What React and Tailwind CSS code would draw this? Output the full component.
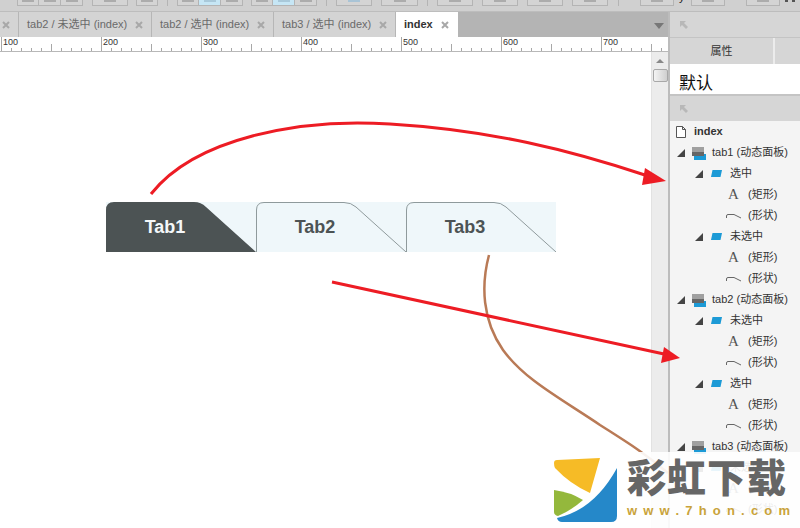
import React from 'react'

const font = "font-['Liberation_Sans','Noto_Sans_CJK_SC',sans-serif]"

const ToolBtn = ({ w, active, blueIcon }) => (
  <div className={`h-[6px] border-r border-b border-[#b4b4b4] flex justify-center ${active ? 'bg-[#c6e6f5]' : 'bg-[#d4d4d4]'}`} style={{ width: w }}>
    <div className={`w-[12px] h-[2px] ${active ? 'bg-[#a9c9da]' : blueIcon ? 'bg-[#a9c4d6]' : 'bg-[#acacac]'}`} />
  </div>
)

const Group = ({ ml, children }) => (
  <div className="flex border-l border-[#b4b4b4]" style={{ marginLeft: ml }}>{children}</div>
)

const Divider = ({ ml }) => <div className="w-px h-[6px] bg-[#b4b4b4]" style={{ marginLeft: ml }} />

const Toolbar = () => (
  <div className="h-[12px] shrink-0 bg-[#d0d0d0] flex items-start border-b border-[#bdbdbd]">
    <Group ml={17}><ToolBtn w={21} /><ToolBtn w={22} /><ToolBtn w={22} /></Group>
    <Group ml={9}><ToolBtn w={35} /></Group>
    <Group ml={8}><ToolBtn w={21} /></Group>
    <Divider ml={9} />
    <Group ml={9}><ToolBtn w={21} /><ToolBtn w={22} active /><ToolBtn w={22} /></Group>
    <Group ml={8}><ToolBtn w={21} /><ToolBtn w={22} active /><ToolBtn w={22} /></Group>
    <Divider ml={9} />
    <Group ml={9}><ToolBtn w={35} blueIcon /></Group>
    <Group ml={9}><ToolBtn w={36} /></Group>
    <Divider ml={9} />
    <Group ml={9}><ToolBtn w={35} /></Group>
    <Group ml={9}><ToolBtn w={35} /></Group>
    <Group ml={9}><ToolBtn w={35} /></Group>
    <Group ml={9}><ToolBtn w={35} /></Group>
    <Divider ml={10} />
    <Group ml={21}><ToolBtn w={33} /></Group>
    <span className="w-[17px] pl-[5px] -mt-[3px] text-[11px] leading-[0px] text-[#222]">y</span>
    <Group ml={0}><ToolBtn w={33} /></Group>
    <Group ml={21}><ToolBtn w={33} /></Group>
    <div className="ml-[5px] w-[3px] h-[2px] bg-[#555]" />
    <div className="ml-[4px] w-[3px] h-[2px] bg-[#555]" />
  </div>
)

const CloseX = () => (
  <svg width="8" height="8" viewBox="0 0 8 8" className="shrink-0">
    <path d="M1 1 L7 7 M7 1 L1 7" stroke="#a8a8a8" strokeWidth="2" />
  </svg>
)

const Tab = ({ label, w }) => (
  <div className="h-full flex items-center justify-between pl-[8px] pr-[8px] border-r border-[#b6b6b6] bg-[#d4d4d4]" style={{ width: w }}>
    <span className="text-[11px] text-[#6a6a6a] whitespace-nowrap">{label}</span>
    <CloseX />
  </div>
)

const TabBar = () => (
  <div className="h-[25px] shrink-0 bg-[#b4b4b4] flex items-stretch">
    <div className="w-[19px] flex items-center justify-center pr-[6px] border-r border-[#b6b6b6] bg-[#d4d4d4]"><CloseX /></div>
    <Tab label="tab2 / 未选中 (index)" w={133} />
    <Tab label="tab2 / 选中 (index)" w={122} />
    <Tab label="tab3 / 选中 (index)" w={122} />
    <div className="w-[62px] bg-white flex items-center gap-[8px] pl-[8px]">
      <span className="text-[11px] font-bold text-[#333]">index</span>
      <CloseX />
    </div>
    <div className="flex-1 flex items-center justify-end pr-[4px]">
      <div className="w-0 h-0 mt-[2px] border-x-[5px] border-x-transparent border-t-[6px] border-t-[#777]" />
    </div>
  </div>
)

const rulerTicks = Array.from({ length: 67 }, (_, i) => i)

const Ruler = () => (
  <div className="h-[15px] shrink-0 bg-white border-b border-[#b8b8b8] relative overflow-hidden">
    <svg width="668" height="14" className="absolute inset-0">
      {rulerTicks.map((i) => {
        const x = 1.5 + i * 10
        const h = i % 10 === 0 ? 14 : i % 5 === 0 ? 7 : 3
        return <line key={i} x1={x} x2={x} y1={14 - h} y2={14} stroke="#a8a8a8" />
      })}
    </svg>
    <div className="flex">
      {[100, 200, 300, 400, 500, 600, 700].map((n) => (
        <span key={n} className="w-[100px] shrink-0 pl-[3px] text-[9px] leading-[11px] text-[#333] relative">{n}</span>
      ))}
    </div>
  </div>
)

const WidgetTab = ({ label, active }) => (
  <div className="w-[150px] h-[50px] relative flex items-center justify-center">
    <svg width="150" height="50" viewBox="0 0 150 50" className="absolute inset-0">
      {active ? (
        <path d="M0 50 V8 Q0 0 8 0 H88 Q95 0 100 5 L150 50 Z" fill="#4c5354" />
      ) : (
        <path d="M0.5 50 V8 Q0.5 0.5 8 0.5 H88 Q95 0.5 100 5 L150 50" fill="none" stroke="#8f9a9c" />
      )}
    </svg>
    <span className={`relative pr-[32px] text-[18px] font-bold ${active ? 'text-[#f4f8fa]' : 'text-[#4c5354]'}`}>{label}</span>
  </div>
)

const Canvas = () => (
  <div className="flex-1 flex bg-white min-h-0">
    <div className="flex-1 pl-[106px] pt-[150px]">
      <div className="w-[450px] h-[50px] flex bg-[#eff7fa]">
        <WidgetTab label="Tab1" active />
        <WidgetTab label="Tab2" />
        <WidgetTab label="Tab3" />
      </div>
    </div>
    <div className="w-[17px] shrink-0 bg-[#ececec] border-l border-[#e2e2e2] flex flex-col items-center pt-[7px]">
      <div className="w-0 h-0 border-x-[4px] border-x-transparent border-b-[4px] border-b-[#888]" />
      <div className="w-[15px] h-[13px] mt-[6px] rounded-[2px] border border-[#a8a8a8] bg-gradient-to-r from-[#f4f4f4] to-[#cfcfcf]" />
    </div>
  </div>
)

const Caret = () => (
  <div className="w-0 h-0 border-l-[8px] border-l-transparent border-b-[8px] border-b-[#444] shrink-0" />
)

const PanelIcon = () => (
  <svg width="16" height="14" viewBox="0 0 16 14" className="shrink-0 block">
    <rect x="3" y="8" width="12" height="6" fill="#1c9ad6" />
    <rect x="1" y="5" width="12" height="5" fill="#666" />
    <rect x="1" y="1" width="12" height="5" fill="#a0a0a0" />
  </svg>
)

const StateIcon = () => (
  <svg width="11" height="7" viewBox="0 0 11 7" className="shrink-0 block">
    <path d="M1.5 0 H11 L9.5 7 H0 Z" fill="#1c9ad6" />
  </svg>
)

const RectIcon = () => (
  <span className="w-[13px] font-['Liberation_Serif',serif] text-[15px] leading-none text-[#555] text-center">A</span>
)

const ShapeIcon = () => (
  <svg width="15" height="6" viewBox="0 0 15 6" className="shrink-0 -ml-[1px] mr-[-1px]">
    <path d="M0.5 5 V3 Q0.5 1.5 2 1.5 H8 L15 5" fill="none" stroke="#666" />
  </svg>
)

const Row = ({ indent, children }) => (
  <div className="h-[21px] flex items-center text-[11px] text-[#333] whitespace-nowrap" style={{ paddingLeft: indent }}>
    {children}
  </div>
)

const StateRows = ({ name }) => (
  <>
    <Row indent={25}><Caret /><span className="ml-[8px]"><StateIcon /></span><span className="ml-[8px]">{name}</span></Row>
    <Row indent={57}><RectIcon /><span className="ml-[8px]">(矩形)</span></Row>
    <Row indent={57}><ShapeIcon /><span className="ml-[8px]">(形状)</span></Row>
  </>
)

const PanelRows = ({ name, states }) => (
  <>
    <Row indent={7}><Caret /><span className="ml-[6px]"><PanelIcon /></span><span className="ml-[5px]">{name} (动态面板)</span></Row>
    {states.map((s) => <StateRows key={s} name={s} />)}
  </>
)

const PinIcon = () => (
  <svg width="10" height="10" viewBox="0 0 10 10"><path d="M1 1 H7 L5 3 L9 7 L7 9 L3 5 L1 7 Z" fill="#b8b8b8" /></svg>
)

const Sidebar = () => (
  <div className="w-[132px] shrink-0 border-l-2 border-[#bcbcbc] flex flex-col bg-[#f4f4f4] overflow-hidden">
    <div className="h-[25px] shrink-0 bg-[#d6d6d6] flex items-center pl-[9px]"><PinIcon /></div>
    <div className="h-[27px] shrink-0 bg-[#d6d6d6] flex border-t border-[#c4c4c4]">
      <div className="w-[105px] pt-[1px] flex items-center justify-center border-r-2 border-[#ececec] text-[11px] text-[#333]">属性</div>
    </div>
    <div className="h-[32px] shrink-0 bg-white border-b-2 border-[#c4c4c4] pl-[9px] flex items-end text-[17px] leading-[20px] text-[#111]">默认</div>
    <div className="h-[25px] shrink-0 bg-[#d6d6d6] flex items-center pl-[9px]"><PinIcon /></div>
    <div>
      <Row indent={6}>
        <svg width="10" height="12" viewBox="0 0 10 12" className="shrink-0"><path d="M0.5 0.5 H6.5 L9.5 3.5 V11.5 H0.5 Z M6.5 0.5 V3.5 H9.5" fill="#fff" stroke="#555" /></svg>
        <span className="ml-[8px] text-[11px] font-bold">index</span>
      </Row>
      <PanelRows name="tab1" states={['选中', '未选中']} />
      <PanelRows name="tab2" states={['未选中', '选中']} />
      <PanelRows name="tab3" states={['未选中']} />
    </div>
  </div>
)

const Arrows = () => (
  <svg width="800" height="528" viewBox="0 0 800 528" className="absolute inset-0 pointer-events-none">
    <path d="M489 255 C481 285 482 320 503 350 C525 380 560 398 600 425 C625 441 645 453 668 473" fill="none" stroke="#b97a56" strokeWidth="2.5" />
    <path d="M151 194 C195 138 300 118 390 124 C490 130 570 150 648 176" fill="none" stroke="#ed1c24" strokeWidth="3" />
    <path d="M645 168 L666 181 L642 185 Z" fill="#ed1c24" />
    <path d="M332 282 L664 354" fill="none" stroke="#ed1c24" strokeWidth="3" />
    <path d="M664 347 L680 358 L661 363 Z" fill="#ed1c24" />
  </svg>
)

const Watermark = () => (
  <div className="absolute right-0 bottom-0 w-[260px] h-[76px] bg-white/90 flex items-start pl-[14px] pt-[6px]">
    <svg width="64" height="64" viewBox="0 0 64 64" className="shrink-0">
      <path d="M0 5 Q0 2 3 2 L46 0 L36 35 Q16 26 1 10 Q0 8 0 5 Z" fill="#f6bb26" />
      <path d="M0 32 Q16 34 29 42 Q18 52 4 58 Q0 57 0 54 Z" fill="#94b83c" />
      <path d="M63 10 V58 Q63 64 57 64 H8 Q4 64 3 60 Q40 52 63 10 Z" fill="#2588c9" />
    </svg>
    <div className="ml-[9px] flex flex-col">
      <span className="text-[39px] leading-[42px] font-black text-[#666] tracking-[1px] whitespace-nowrap">彩虹下载</span>
      <span className="mt-[3px] text-[13px] leading-[16px] font-bold text-[#c9a33a] tracking-[6.2px] whitespace-nowrap">www.7hon.com</span>
    </div>
  </div>
)

export default function App() {
  return (
    <div className={`w-[800px] h-[528px] overflow-hidden relative flex flex-col ${font}`}>
      <Toolbar />
      <div className="flex-1 flex min-h-0">
        <div className="w-[668px] flex flex-col shrink-0">
          <TabBar />
          <Ruler />
          <Canvas />
        </div>
        <Sidebar />
      </div>
      <Arrows />
      <Watermark />
    </div>
  )
}
